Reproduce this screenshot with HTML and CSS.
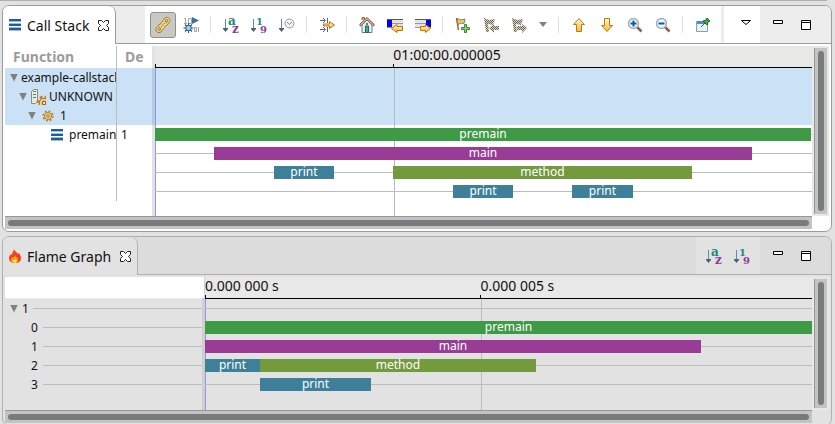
FILE: index.html
```html
<!DOCTYPE html>
<html lang="en">
<head>
<meta charset="utf-8">
<meta name="viewport" content="width=device-width, initial-scale=1">
<title>Call Stack</title>
<link rel="stylesheet" href="styles.css">
</head>
<body>
<svg class="defs" aria-hidden="true">
  <defs>
    <linearGradient id="gold" x1="0" y1="0" x2="0" y2="1"><stop offset="0" stop-color="#fff6cc"/><stop offset="1" stop-color="#f5b92e"/></linearGradient>
    <pattern id="dither" width="2" height="2" patternUnits="userSpaceOnUse"><path d="M0 0h1v1H0zM1 1h1v1H1z" fill="#6e6350"/><path d="M1 0h1v1H1zM0 1h1v1H0z" fill="#d9d4c4"/></pattern>
  </defs>
  <symbol id="i-close" viewBox="0 0 11 11"><path d="M.5.5h3l2 2 2-2h3v3l-2 2 2 2v3h-3l-2-2-2 2h-3v-3l2-2-2-2z" fill="#fff" stroke="#222"/></symbol>
  <symbol id="i-stack" viewBox="0 0 12 12"><path d="M0 0h12v2H0zM0 5h12v2H0zM0 9h12v2H0z" fill="#1d5c9e"/><path d="M0 2h12v1H0zM0 4h12v1H0zM0 8h12v1H0zM0 11h12v1H0z" fill="#9dbbdc"/></symbol>
  <symbol id="i-link" viewBox="0 0 16 16"><g transform="rotate(-48 8 8)" fill="none"><g stroke="#a06f1c" stroke-width="2.600"><rect x="0" y="6" width="7" height="4" rx="2"/><rect x="9" y="6" width="7" height="4" rx="2"/><rect x="4.500" y="6.500" width="7" height="3" rx="1.500"/></g><g stroke="#f7dc98" stroke-width="1.200"><rect x="0" y="6" width="7" height="4" rx="2"/><rect x="9" y="6" width="7" height="4" rx="2"/><rect x="4.500" y="6.500" width="7" height="3" rx="1.500"/></g></g></symbol>
  <symbol id="i-debug" viewBox="0 0 16 16"><path d="M1 1.500h1.500V6M1 6.500h3M5.500 1.500h3v5h-3zM11.500 10.500h2v4h-2zM15.500 10v5" fill="none" stroke="#a3a3a3"/><path d="M9 0l7 3.500L9 7z" fill="#3a7297"/><path d="M5.500 6v10M.5 11h10M2 7.500l7 7M9 7.500l-7 7" stroke="#245d80" stroke-width="1.200"/><circle cx="5.500" cy="11" r="2.800" fill="#a5cde2" stroke="#245d80"/></symbol>
  <symbol id="i-down" viewBox="0 0 16 16"><path d="M2.500 2v10" stroke="#4d8fc0"/><path d="M0 11h5v1L2.500 15 0 12z" fill="#53616f"/></symbol>
  <symbol id="i-clock" viewBox="0 0 16 16"><use href="#i-down"/><circle cx="10.500" cy="6.500" r="4.500" fill="#f2f2f2" stroke="#9b9b9b"/><path d="M8 5l2.500 2.500L13 5" fill="none" stroke="#888"/></symbol>
  <symbol id="i-filter" viewBox="0 0 16 16"><path d="M1 3.500h5M4 1l2.500 2.500L4 6M8.500 1v5M1 12.500h5M4 10l2.500 2.500L4 15M8.500 10v5" fill="none" stroke="#51677c"/><path d="M4.500 7h6V4.500L15.500 8l-5 3.500V9h-6z" fill="url(#gold)" stroke="#b77a18"/></symbol>
  <symbol id="i-home" viewBox="0 0 16 16"><path d="M3 7l5-5 5 5v8.500H3z" fill="#e3eef8" stroke="#5f7f9d"/><path d="M3 3V.5h2.500V3M1 9V7l7-6.500L15 7v2l-1.500-.5L8 3 2.500 8.500z" fill="#cfaa83" stroke="#90694b"/><path d="M6.500 9h3v6.500h-3z" fill="#55ad54" stroke="#255f73"/><path d="M7 6h2v2H7z" fill="#3b83a8"/></symbol>
  <symbol id="i-prev" viewBox="0 0 16 16"><path d="M0 2h16v9H0z" fill="#e3e3e3"/><path d="M0 2.500h16M0 6.500h16M0 10.500h16" stroke="#999"/><path d="M0 2.500h16" stroke="#555"/><path d="M0 3h5v7H0z" fill="#0000f2"/><path d="M15.500 9.500v4H10v2L4.500 11.500 10 7.500v2z" fill="url(#gold)" stroke="#b87513"/></symbol>
  <symbol id="i-next" viewBox="0 0 16 16"><path d="M0 2h16v9H0z" fill="#e3e3e3"/><path d="M0 2.500h16M0 6.500h16M0 10.500h16" stroke="#999"/><path d="M0 2.500h16" stroke="#555"/><path d="M11 3h5v7h-5z" fill="#0000f2"/><path d="M5.500 9.500v4h5v2l5-4-5-4v2z" fill="url(#gold)" stroke="#b87513"/></symbol>
  <symbol id="i-flag" viewBox="0 0 16 16"><path d="M1.500 1l2 12" stroke="#8a6b2c" stroke-width="1.500"/><path d="M2 1.500l4 1.500 4-1-1 4.500-3-.5-3 1.500z" fill="#e6cf83" stroke="#9b7b39"/><path d="M9.500 7.500h2v3h3v2h-3v3h-2v-3h-3v-2h3z" fill="#8bcf66" stroke="#398845"/></symbol>
  <symbol id="i-flagprev" viewBox="0 0 16 16"><path d="M1 1l5 2 6-1-2 6-5-1 1 8H3z" fill="url(#dither)"/><path d="M16 9v4h-5v3l-5-5 5-4v2z" fill="url(#dither)"/></symbol>
  <symbol id="i-flagnext" viewBox="0 0 16 16"><path d="M1 1l5 2 6-1-2 6-5-1 1 8H3z" fill="url(#dither)"/><path d="M6 9v4h5v3l5-5-5-4v2z" fill="url(#dither)"/></symbol>
  <symbol id="i-up" viewBox="0 0 16 16"><path d="M8 1.500l5.500 6h-3v7h-5v-7h-3z" fill="url(#gold)" stroke="#b37a16"/></symbol>
  <symbol id="i-downgold" viewBox="0 0 16 16"><path d="M8 14.500l5.500-6h-3v-7h-5v7h-3z" fill="url(#gold)" stroke="#b37a16"/></symbol>
  <symbol id="i-lens" viewBox="0 0 16 16"><path d="M10 10l4.500 4.500" stroke="#8b5e50" stroke-width="2.500"/><circle cx="6.500" cy="6.500" r="5" fill="#eaf5ff" stroke="#a9adb0" stroke-width="1.500"/><path d="M3.500 6.500h6" stroke="#075f9e" stroke-width="2"/></symbol>
  <symbol id="i-zoomin" viewBox="0 0 16 16"><use href="#i-lens"/><path d="M6.500 3.500v6" stroke="#075f9e" stroke-width="2"/></symbol>
  <symbol id="i-pin" viewBox="0 0 16 16"><path d="M1.500 4.500h11v10h-11z" fill="#eaf4fc" stroke="#8c9dac"/><path d="M2 4h10v3H2z" fill="#4a92cb"/><path d="M6 10l4-4" stroke="#555"/><path d="M8 4l4 4 1-3 2-1-3-3-1 2z" fill="#48a843" stroke="#1d6628"/></symbol>
  <symbol id="i-menu" viewBox="0 0 16 16"><path d="M3.500 3.500h9l-4.500 4z" fill="#fff" stroke="#000"/></symbol>
  <symbol id="i-min" viewBox="0 0 16 16"><path d="M3.500 3.500h9v3h-9z" fill="#fff" stroke="#000"/></symbol>
  <symbol id="i-max" viewBox="0 0 16 16"><path d="M3.500 3.500h9v9h-9zM3 5.500h10" fill="#fff" stroke="#000"/></symbol>
  <symbol id="i-gear" viewBox="0 0 12 12"><circle cx="6" cy="6" r="4.700" fill="none" stroke="#b87a28" stroke-width="1.800" stroke-dasharray="1.850 1.840"/><circle cx="6" cy="6" r="3.500" fill="#fbdc90" stroke="#b87a28"/><circle cx="6" cy="6" r="1.300" fill="#fff" stroke="#a56b16"/></symbol>
  <symbol id="i-server" viewBox="0 0 16 16"><path d="M1.500 2.500l2-2h4v12l-2 2h-4z" fill="#e7ebdf" stroke="#858c80"/><path d="M3 5.500h3M3 8.500h3" stroke="#737b70"/><path d="M3 2h3v1H3z" fill="#38a33c"/><svg x="6" y="6" width="10" height="10"><use href="#i-gear"/></svg></symbol>
  <symbol id="i-flame" viewBox="0 0 12 16"><path d="M5 1c1 3 3 3 4 5l1-1c1 2 2 3 2 5 0 4-3 5-6 5s-6-1-6-5c0-2 1-3 2-4l1 1C3 4 5 3 5 1z" fill="#f04416"/><path d="M6 7c0 2 3 2 3 5 0 2-1 3-3 3s-4-1-4-3 1-2 2-3l1 1z" fill="#ff9e20"/><path d="M6 11l2 2-2 2-3-2 1-1 1 1z" fill="#fff05a"/></symbol>
</svg>

<div class="edge"></div>
<main>
  <section class="panel" aria-label="Call Stack">
    <header class="bar">
      <h2 class="tab"><svg class="stack"><use href="#i-stack"/></svg><span>Call Stack</span><button class="close" aria-label="Close Call Stack"><svg><use href="#i-close"/></svg></button></h2>
      <div class="strip">
        <div class="tools">
          <button class="pressed" aria-label="Link"><svg><use href="#i-link"/></svg></button>
          <button aria-label="Trace"><svg><use href="#i-debug"/></svg></button>
          <i class="sep"></i>
          <button aria-label="Sort by name"><svg viewBox="0 0 16 16"><use href="#i-down"/><text x="5" y="8" class="glyph teal">a</text><text x="9" y="16" class="glyph purple">z</text></svg></button>
          <button aria-label="Sort by id"><svg viewBox="0 0 16 16"><use href="#i-down"/><text x="5" y="8" class="glyph small teal">1</text><text x="9" y="16" class="glyph small purple">9</text></svg></button>
          <button aria-label="Sort by time"><svg><use href="#i-clock"/></svg></button>
          <i class="sep"></i>
          <button aria-label="Filters"><svg><use href="#i-filter"/></svg></button>
          <i class="sep"></i>
          <button aria-label="Reset time"><svg><use href="#i-home"/></svg></button>
          <button aria-label="Previous event"><svg><use href="#i-prev"/></svg></button>
          <button aria-label="Next event"><svg><use href="#i-next"/></svg></button>
          <i class="sep"></i>
          <button aria-label="Add bookmark"><svg><use href="#i-flag"/></svg></button>
          <button aria-label="Previous marker" disabled><svg><use href="#i-flagprev"/></svg></button>
          <button aria-label="Next marker" disabled><svg><use href="#i-flagnext"/></svg></button>
          <button class="drop" aria-label="Marker menu"><span class="arrow"></span></button>
          <i class="sep"></i>
          <button aria-label="Up"><svg><use href="#i-up"/></svg></button>
          <button aria-label="Down"><svg><use href="#i-downgold"/></svg></button>
          <button aria-label="Zoom in"><svg><use href="#i-zoomin"/></svg></button>
          <button aria-label="Zoom out"><svg><use href="#i-lens"/></svg></button>
          <i class="sep"></i>
          <button aria-label="Pin view"><svg><use href="#i-pin"/></svg></button>
        </div>
        <div class="tools menu"><button aria-label="View menu"><svg><use href="#i-menu"/></svg></button></div>
        <div class="window"><button aria-label="Minimize"><svg><use href="#i-min"/></svg></button><button aria-label="Maximize"><svg><use href="#i-max"/></svg></button></div>
      </div>
    </header>
    <div class="body">
      <div class="view">
        <div class="side">
          <table class="tree">
            <thead><tr><th>Function</th><th>De</th></tr></thead>
            <tbody>
              <tr class="selected"><td><div class="node"><span class="arrow"></span>example-callstack</div></td><td></td></tr>
              <tr class="selected"><td><div class="node level1"><span class="arrow"></span><svg class="icon"><use href="#i-server"/></svg>UNKNOWN</div></td><td></td></tr>
              <tr class="selected"><td><div class="node level2"><span class="arrow"></span><svg class="gear"><use href="#i-gear"/></svg>1</div></td><td></td></tr>
              <tr><td><div class="node level3"><svg class="stack"><use href="#i-stack"/></svg>premain</div></td><td>1</td></tr>
              <tr><td></td><td></td></tr>
              <tr><td></td><td></td></tr>
              <tr><td></td><td></td></tr>
            </tbody>
          </table>
        </div>
        <div class="sash picked"></div>
        <div class="chart">
          <div class="axis"><span class="mark" style="width:36.28%"></span><span class="mark">01:00:00.000005</span></div>
          <div class="lanes picked" style="--tick:36.28%">
            <div class="blank"></div><div class="blank"></div><div class="blank"></div>
            <div class="lane"><span class="call green" style="width:99.85%">premain</span></div>
            <div class="lane"><span class="call violet" style="margin-left:8.98%;width:81.9%">main</span></div>
            <div class="lane"><span class="call blue" style="margin-left:18.11%;width:9.13%">print</span><span class="call olive" style="margin-left:8.98%;width:45.51%">method</span></div>
            <div class="lane"><span class="call blue" style="margin-left:45.36%;width:9.13%">print</span><span class="call blue" style="margin-left:8.98%;width:9.28%">print</span></div>
          </div>
        </div>
      </div>
      <div class="vscroll"><div class="track"><div class="thumb"></div></div></div>
      <div class="hscroll"><div class="thumb"></div></div>
    </div>
  </section>

  <section class="panel inactive" aria-label="Flame Graph">
    <header class="bar">
      <h2 class="tab"><svg class="flame"><use href="#i-flame"/></svg><span>Flame Graph</span><button class="close" aria-label="Close Flame Graph"><svg><use href="#i-close"/></svg></button></h2>
      <div class="strip">
        <div class="tools">
          <button aria-label="Sort by name"><svg viewBox="0 0 16 16"><use href="#i-down"/><text x="5" y="8" class="glyph teal">a</text><text x="9" y="16" class="glyph purple">z</text></svg></button>
          <button aria-label="Sort by id"><svg viewBox="0 0 16 16"><use href="#i-down"/><text x="5" y="8" class="glyph small teal">1</text><text x="9" y="16" class="glyph small purple">9</text></svg></button>
        </div>
        <div class="window"><button aria-label="Minimize"><svg><use href="#i-min"/></svg></button><button aria-label="Maximize"><svg><use href="#i-max"/></svg></button></div>
      </div>
    </header>
    <div class="body">
      <div class="view wide">
        <div class="side">
          <div class="blankhead"></div>
          <ul class="depths">
            <li class="root"><span class="arrow"></span>1</li>
            <li>0</li>
            <li>1</li>
            <li>2</li>
            <li>3</li>
          </ul>
        </div>
        <div class="sash"></div>
        <div class="chart">
          <div class="axis"><span class="mark" style="width:45.38%">0.000 000 s</span><span class="mark">0.000 005 s</span></div>
          <div class="lanes" style="--tick:45.38%">
            <div class="lane"></div>
            <div class="lane"><span class="call green" style="width:100%">premain</span></div>
            <div class="lane"><span class="call violet" style="width:81.7%">main</span></div>
            <div class="lane"><span class="call blue" style="width:9.06%">print</span><span class="call olive" style="width:45.47%">method</span></div>
            <div class="lane"><span class="call blue" style="margin-left:9.06%;width:18.29%">print</span></div>
          </div>
        </div>
      </div>
      <div class="vscroll"><div class="track"><div class="thumb"></div></div></div>
      <div class="hscroll"><div class="thumb"></div></div>
    </div>
  </section>
</main>
</body>
</html>
```

FILE: styles.css
```css
* { box-sizing: border-box; }

body {
  margin: 0;
  overflow: hidden;
  background: #e2e2e2;
  color: #111;
  font: 12px/19px "Noto Sans", "Open Sans", sans-serif;
}

.defs { position: absolute; width: 0; height: 0; }
svg { display: block; flex: none; width: 16px; height: 16px; }
button {
  display: flex;
  align-items: center;
  justify-content: center;
  padding: 0;
  border: 0;
  background: none;
}

.edge { height: 1px; margin-right: 8px; background: #b0b0b0; }
main {
  display: flex;
  flex-direction: column;
  gap: 4px;
  padding: 4px 3px 4px 2px;
}

.panel {
  --surface: #fff;
  --strip: #ededed;
  --line: #9c9c9c;
  overflow: hidden;
  border: 1px solid var(--line);
  border-radius: 7px;
  background: var(--surface);
}
.inactive { --surface: #e2e2e2; --strip: #dcdcdc; --line: #b0b0b0; }

.bar { display: flex; height: 38px; background: var(--strip); }
.tab {
  display: flex;
  align-items: center;
  gap: 6px;
  margin: 0;
  padding: 0 6px;
  border-right: 1px solid var(--line);
  border-radius: 0 7px 0 0;
  background: var(--surface);
  font-size: 14px;
  font-weight: 400;
  white-space: nowrap;
}
.tab .flame { width: 12px; height: 16px; }
.close { margin-left: 3px; }
.close svg { width: 11px; height: 11px; }
.stack { width: 12px; height: 12px; }

.strip {
  display: flex;
  flex: 1;
  justify-content: flex-end;
  border-bottom: 1px solid var(--line);
}
.tools {
  display: flex;
  align-items: center;
  padding: 0 4px;
  background: var(--surface);
}
.tools button, .window button { width: 28px; height: 26px; }
.tools .drop { width: 20px; }
.tools .pressed {
  width: 26px;
  margin: 0 1px;
  border: 1px solid #8f8f8b;
  border-radius: 3px;
  background: #c8c8c4;
}
.menu { margin-left: 3px; padding: 0 0 0 8px; }
.sep { width: 12px; height: 16px; background: linear-gradient(#ddd, #ddd) 5px 0 / 1px 100% no-repeat; }
.window { display: flex; align-items: center; padding: 0 11px 0 4px; }
.glyph { font: bold 12px "DejaVu Serif", serif; }
.glyph.small { font-size: 10px; }
.teal { fill: #1f8a7c; }
.purple { fill: #8d3b95; }

.arrow {
  flex: none;
  width: 8px;
  height: 8px;
  background: #808080;
  clip-path: polygon(0 0, 100% 0, 50% 100%);
}
.drop .arrow { height: 5px; }

.body {
  display: grid;
  grid-template-columns: 1fr 17px;
  padding: 2px;
}
.view { display: grid; grid-template-columns: 147px 3px 1fr; min-width: 0; }
.view.wide { grid-template-columns: 197px 3px 1fr; }
.side { min-width: 0; }

.tree {
  width: 100%;
  table-layout: fixed;
  border-spacing: 0;
}
.tree th {
  height: 22px;
  padding: 0 0 0 8px;
  color: #9c9c9c;
  font-size: 14px;
  line-height: 20px;
  text-align: left;
}
.tree td { height: 19px; padding: 0 0 0 4px; overflow: hidden; }
.tree th:first-child, .tree td:first-child { width: 112px; border-right: 1px solid #bcbcbc; }
.tree td:first-child { padding: 0; }
.selected { background: #cae1f6; }
.node { display: flex; align-items: center; gap: 3px; padding-left: 5px; white-space: nowrap; }
.level1 { padding-left: 14px; }
.level2 { padding-left: 23px; gap: 6px; }
.level3 { padding-left: 46px; gap: 6px; }
.gear { width: 12px; height: 12px; }

.sash { background: #e2e2e2; }
.sash.picked { background: linear-gradient(#b7cbdd, #b7cbdd) 0 22px / 100% 57px no-repeat #e2e2e2; }
.inactive .sash { background: linear-gradient(#fff, #fff) 0 0 / 2px 21px no-repeat #cfcfcf; }

.chart { min-width: 0; }
.axis {
  display: flex;
  height: 22px;
  border-bottom: 1px solid #000;
  background: #e8e8e6;
  font-size: 14px;
  line-height: 18px;
  white-space: nowrap;
}
.mark { background: linear-gradient(#000, #000) 0 100% / 1px 3px no-repeat; }
.lanes {
  min-height: 148px;
  border-left: 1px solid #9494e6;
  background: linear-gradient(#bcbcbc, #bcbcbc) var(--tick) 0 / 1px 100% no-repeat;
}
.lanes.picked {
  background:
    linear-gradient(#b4bcc3, #b4bcc3) var(--tick) 0 / 1px 100% no-repeat,
    linear-gradient(#cae1f6, #cae1f6) 0 0 / 100% 57px no-repeat;
}
.inactive .lanes { min-height: 111px; padding-bottom: 16px; }
.blank { height: 19px; }
.lane {
  display: flex;
  align-items: center;
  height: 19px;
  margin-left: -1px;
  background: linear-gradient(#bcbcbc, #bcbcbc) 0 9px / 100% 1px no-repeat;
}
.call { height: 13px; color: #fff; line-height: 12px; text-align: center; }
.green { background: #3e9a45; }
.violet { background: #993c95; }
.blue { background: #3e7f99; }
.olive { background: #739a3c; }

.blankhead { height: 22px; border-bottom: 1px solid #e8e8e8; background: #fff; }
.depths { margin: 0; padding: 0; list-style: none; }
.depths li { display: flex; align-items: center; gap: 5px; height: 19px; padding-left: 26px; }
.depths .root { padding-left: 5px; gap: 4px; }
.depths li::after { content: ""; flex: 1; height: 1px; background: #bcbcbc; }

.vscroll { display: flex; padding: 2px; background: #e8e8e6; }
.track { display: flex; flex: 1; padding: 3px; border-left: 1px solid #979797; background: #c2c4c3; }
.hscroll { display: flex; height: 13px; padding: 3px; border-top: 1px solid #979797; background: #c2c4c3; }
.thumb { flex: 1; border-radius: 3px; background: #777b7b; }
```
